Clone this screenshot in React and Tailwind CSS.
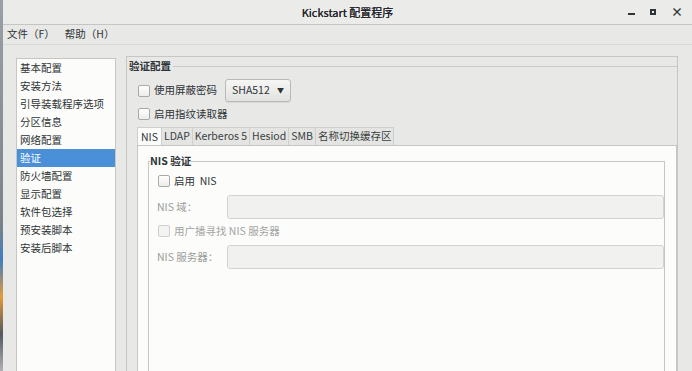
import React from "react";

const items = ["基本配置", "安装方法", "引导装载程序选项", "分区信息", "网络配置", "验证", "防火墙配置", "显示配置", "软件包选择", "预安装脚本", "安装后脚本"];
const tabs = ["NIS", "LDAP", "Kerberos 5", "Hesiod", "SMB", "名称切换缓存区"];

function Check({ disabled }) {
  return (
    <span
      className={
        "inline-block w-[12px] h-[12px] rounded-[2px] border shrink-0 " +
        (disabled ? "border-[#cfcfcd] bg-[#f3f3f1]" : "border-[#a9aaa8] bg-[linear-gradient(#ffffff,#ececea)]")
      }
    />
  );
}

function Field({ label }) {
  return (
    <div className="flex items-center h-[24px] mt-[5px]">
      <span className="w-[77px] pl-[7px] text-[#9a9c9c]">{label}</span>
      <div className="flex-1 h-full rounded-[3px] border border-[#d3d3d1] bg-[#f1f1ef]" />
    </div>
  );
}

export default function App() {
  return (
    <div className="w-[692px] h-[371px] overflow-hidden flex bg-[#e8e8e7] text-[#2e3436] text-[10.5px] leading-none font-['Noto_Sans_CJK_SC','DejaVu_Sans',sans-serif]">
      <div className="w-[3px] shrink-0 bg-[linear-gradient(to_bottom,#9aa0a3_0%,#7c8287_60%,#3f7fc0_70%,#e39a3a_80%,#54595e_90%,#aeb2b4_100%)]" />
      <div className="flex-1 flex flex-col">
        <div className="h-[25px] shrink-0 grid grid-cols-[1fr_auto_1fr] items-center bg-[#ebebea] border-b border-[#c5c5c3]">
          <div />
          <span className="text-[11px] text-[#1f2326] [text-shadow:0_0_0.4px_#1f2326]">Kickstart 配置程序</span>
          <div className="flex justify-end items-center gap-[15px] pr-[9px] text-[#2e3436]">
            <span className="w-[7px] h-[2px] bg-[#2e3436] mt-[4px]" />
            <span className="w-[6px] h-[6px] border-2 border-[#2e3436]" />
            <span className="text-[12px] font-bold">×</span>
          </div>
        </div>
        <div className="h-[20px] shrink-0 flex items-center pl-[4px] gap-[10px] border-b border-[#dadad8]">
          <span>文件（F）</span>
          <span>帮助（H）</span>
        </div>
        <div className="flex-1 flex pt-[11px] pl-[13px]">
          <div className="w-[100px] mt-[2px] border border-[#c6c6c4] bg-[#fcfcfa] flex flex-col">
            {items.map((t, i) => (
              <div key={t} className={"h-[18px] flex items-center pl-[3px] " + (i === 5 ? "bg-[#4a90d9] text-white" : "")}>
                {t}
              </div>
            ))}
          </div>
          <div className="w-[552px] ml-[10px] border-l border-t border-r border-[#c6c6c4] flex flex-col">
            <div className="h-[16px] mt-[1px] flex items-center pl-[2px]">
              <span className="font-bold">验证配置</span>
              <span className="flex-1 h-px bg-[#cbcbc9] ml-[2px]" />
            </div>
            <div className="pl-[11px] mt-[5px] h-[23px] flex items-center">
              <Check />
              <span className="ml-[4px]">使用屏蔽密码</span>
              <div className="ml-[8px] w-[66px] h-[23px] rounded-[3px] border border-[#b9b9b7] bg-[linear-gradient(#f6f6f5,#e2e2e0)] shadow-[0_1px_0_#d8d8d6] flex items-center justify-between px-[6px]">
                <span>SHA512</span>
                <span className="text-[7px]">▼</span>
              </div>
            </div>
            <div className="pl-[11px] mt-[3px] h-[18px] flex items-center">
              <Check />
              <span className="ml-[4px]">启用指纹读取器</span>
            </div>
            <div className="ml-[10px] mt-[4px] flex-1 flex flex-col">
              <div className="h-[18px] flex">
                {tabs.map((t, i) => (
                  <div
                    key={t}
                    className={
                      "px-[2px] flex items-center border-t border-l border-[#cfcfcd] " +
                      (i === 0 ? "bg-[#fcfcfa] -mb-px px-[3px]" : "bg-[#e4e4e2] text-[#3a3f41]") +
                      (i === tabs.length - 1 ? " border-r" : "")
                    }
                  >
                    {t}
                  </div>
                ))}
              </div>
              <div className="flex-1 border border-[#c6c6c4] bg-[#fcfcfa] pt-[7px] pl-[10px] pr-[11px]">
                <fieldset className="border border-[#c6c6c4] h-[260px] pl-[1px] pr-0">
                  <legend className="font-bold px-0 leading-[16px]">NIS 验证</legend>
                  <div className="pl-[8px] mt-[3px] h-[18px] flex items-center">
                    <Check />
                    <span className="ml-[4px]">启用&nbsp;&nbsp;NIS</span>
                  </div>
                  <Field label="NIS 域：" />
                  <div className="pl-[8px] mt-[3px] h-[18px] flex items-center text-[#a2a4a4]">
                    <Check disabled />
                    <span className="ml-[4px]">用广播寻找 NIS 服务器</span>
                  </div>
                  <Field label="NIS 服务器：" />
                </fieldset>
              </div>
            </div>
          </div>
        </div>
      </div>
    </div>
  );
}
